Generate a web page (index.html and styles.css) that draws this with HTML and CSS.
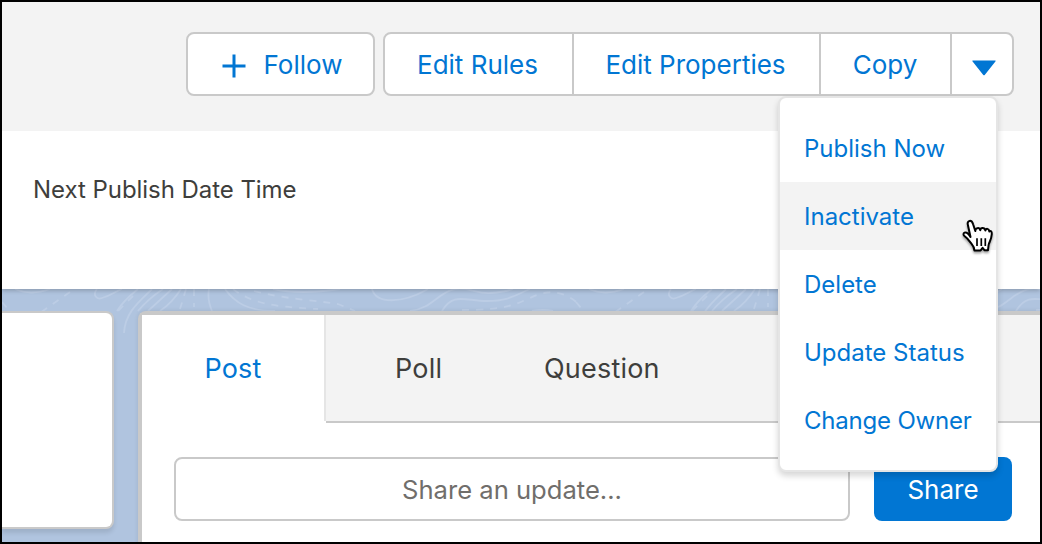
FILE: index.html
```html
<!DOCTYPE html>
<html lang="en">
    <head>
        <meta charset="UTF-8">
        <title>Record Page</title>
        <link rel="stylesheet" href="styles.css">
    </head>
    <body>
        <div class="frame">
            <header class="page-header">
                <button class="button follow">
                    <svg class="plus" viewBox="0 0 24 24"><path d="M12 0.5v23M0.5 12h23"/></svg>
                    <span>Follow</span>
                </button>
                <div class="button-group">
                    <button class="button edit-rules">Edit Rules</button>
                    <button class="button edit-properties">Edit Properties</button>
                    <button class="button copy">Copy</button>
                    <button class="button more" aria-label="More actions">
                        <svg class="arrow" viewBox="0 0 24 16"><path d="M1 .5h22c.7 0 .8.5.4 1L12.7 14.9q-.7.8-1.4 0L.6 1.500C.2 1 .3.5 1 .5z"/></svg>
                    </button>
                    <ul class="menu">
                        <li class="menu-item">Publish Now</li>
                        <li class="menu-item active">Inactivate</li>
                        <li class="menu-item">Delete</li>
                        <li class="menu-item">Update Status</li>
                        <li class="menu-item wide">Change Owner</li>
                    </ul>
                    <svg class="pointer" viewBox="0 0 32 36">
                        <path d="M8.500 18L6 6.500C5.200 3.800 5.800 2.200 7.600 1.900C9.500 1.600 10.400 2.800 11.200 5.500L13.300 12C13 8.700 17.500 8 18.300 11.200C18.500 8.200 22.600 8 23.400 11.500C23.800 9 27 9.300 27.300 12.500C28.500 11.300 30 12.300 29.800 15C29.500 19.500 28.300 21.500 27 24.500C26.400 26 26.400 28.500 26 31.200H22.400L20.600 28.800L18.600 31.400H12.400C12.200 27 9.800 25.400 7.800 22.600C5.800 19.800 4.600 18.700 2.700 17.300C1 16 1.200 14.200 2.500 13.600C4.800 12.600 7 15.400 8.500 18Z"/>
                        <path class="knuckles" d="M15 19.300v7.700M19.300 19.300v7.700M23.300 19.300v7.700"/>
                    </svg>
                </div>
            </header>
            <section class="details">
                <span class="label">Next Publish Date Time</span>
            </section>
            <main>
                <svg class="contours" viewBox="0 0 1042 60">
                    <defs>
                        <g id="contour">
                            <path d="M15 0Q31 7 50 0M97 0C92 6 97 11 102 9C110 7 114 3 122 0M138 0Q123 12 117 22M152 0C140 12 125 23 124 44M163 0Q148 10 138 22M172 0Q161 10 148 22M181 0Q172 14 160 22M209 0Q207 10 212 22M225 0C235 14 248 22 275 22M273 0Q300 6 340 0"/>
                            <path d="M372 0C376 15 402 15 428 0M410 22C432 20 438 3 455 0C470-2 476 5 491 4Q505 3 513 0M442 22C453 3 465 12 487 12C510 12 517 5 530 0M532 22Q543 20 553 22"/>
                            <path class="dashed" d="M2 13L8 20M70 3L40 24M133 7L113 27M186 0L180 20M194 0V18M233 0C250 13 270 18 318 20M254 2C285 10 312 11 338 15L355 22M462 21C505 21 514 16 530 9C548 0 563 1 580 16"/>
                        </g>
                    </defs>
                    <use href="#contour"/>
                    <use href="#contour" x="574"/>
                </svg>
                <div class="side-card"></div>
                <div class="feed">
                    <div class="tabs">
                        <div class="tab post">Post</div>
                        <div class="tab poll">Poll</div>
                        <div class="tab question">Question</div>
                        <div class="tab filler"></div>
                    </div>
                    <div class="composer">
                        <input class="update" type="text" placeholder="Share an update...">
                        <button class="share">Share</button>
                    </div>
                </div>
            </main>
        </div>
    </body>
</html>
```
FILE: styles.css
```css
* {
    box-sizing: border-box;
}

body {
    margin: 0;
    font-family: Inter, "Liberation Sans", sans-serif;
    font-size: 26px;
    color: #3e3e3c;
}

button {
    font: inherit;
    padding: 0;
    cursor: pointer;
}

.frame {
    width: 1042px;
    height: 544px;
    border: 2px solid #000;
    overflow: hidden;
    display: flex;
    flex-direction: column;
    background: #fff;
}

/* header and actions */
.page-header {
    position: relative;
    z-index: 2;
    height: 129px;
    flex: none;
    background: #f3f3f3;
    display: flex;
    justify-content: flex-end;
    align-items: flex-start;
    gap: 8px;
    padding: 30px 26px 0 0;
}

.button {
    height: 64px;
    background: #fff;
    border: 2px solid #c9c9c9;
    color: #0176d3;
    display: flex;
    align-items: center;
    justify-content: center;
    padding-top: 1px;
}

.follow {
    width: 189px;
    padding-left: 3px;
    border-radius: 8px;
    gap: 18px;
}

.plus {
    width: 24px;
    height: 24px;
    margin-top: 2px;
    fill: none;
    stroke: #0176d3;
    stroke-width: 3;
}

.button-group {
    display: flex;
    position: relative;
}

.edit-rules {
    width: 191px;
    padding-right: 2px;
    border-radius: 8px 0 0 8px;
}

.edit-properties {
    width: 249px;
    margin-left: -2px;
    padding-right: 2px;
}

.copy {
    width: 133px;
    margin-left: -2px;
    padding-right: 1px;
}

.more {
    width: 64px;
    margin-left: -2px;
    padding-left: 3px;
    border-radius: 0 8px 8px 0;
}

.arrow {
    width: 24px;
    height: 16px;
    margin-top: 6px;
    fill: #0176d3;
}

/* dropdown */
.menu {
    position: absolute;
    top: 64px;
    right: 16px;
    width: 220px;
    z-index: 2;
    margin: 0;
    padding: 16px 0;
    list-style: none;
    background: #fff;
    border: 2px solid #e5e5e5;
    border-radius: 8px;
    box-shadow: 0 4px 6px rgba(0, 0, 0, 0.16);
}

.menu-item {
    height: 68px;
    line-height: 69px;
    padding-left: 24px;
    font-size: 24px;
    color: #0176d3;
}

.menu-item.active {
    background: #f3f3f3;
}

.menu-item.wide {
    letter-spacing: -0.2px;
}

.pointer {
    position: absolute;
    z-index: 3;
    top: 187px;
    right: 20px;
    width: 32px;
    height: 36px;
    fill: #fff;
    stroke: #000;
    stroke-width: 2;
    stroke-linejoin: round;
    filter: drop-shadow(0 2px 1px rgba(0, 0, 0, 0.35));
}

.knuckles {
    stroke-width: 1.7;
}

/* details */
.details {
    position: relative;
    z-index: 1;
    height: 158px;
    flex: none;
    padding: 43px 31px;
    background: #fff;
    box-shadow: 0 2px 4px rgba(0, 0, 0, 0.2);
}

.label {
    display: block;
    font-size: 24px;
    line-height: 31px;
    letter-spacing: -0.05px;
}

/* feed area */
main {
    flex: 1;
    display: flex;
    align-items: flex-start;
    gap: 24px;
    padding-top: 22px;
    background: #b0c4df;
    position: relative;
}

.contours {
    position: absolute;
    top: 0;
    left: -2px;
    width: 1042px;
    height: 60px;
    fill: none;
    stroke: #bccde5;
    stroke-width: 1.8;
}

.dashed {
    stroke-dasharray: 7 7;
}

.side-card {
    position: relative;
    width: 112px;
    height: 218px;
    background: #fff;
    border: 2px solid #c9c9c9;
    border-left: 0;
    border-radius: 0 8px 8px 0;
    box-shadow: 0 4px 4px rgba(0, 0, 0, 0.1);
}

.feed {
    position: relative;
    flex: 1;
    height: 240px;
    background: #fff;
    border: 4px solid #c9c9c9;
    border-right: 0;
    border-radius: 8px 0 0 0;
    box-shadow: 0 0 4px rgba(0, 0, 0, 0.1);
}

.tabs {
    display: flex;
    height: 108px;
    background: #fff;
}

.tab {
    background: #f3f3f3;
    border-bottom: 2px solid #c9c9c9;
    line-height: 108px;
    font-size: 27px;
    letter-spacing: 0.2px;
}

.post {
    width: 184px;
    height: 106px;
    background: #fff;
    border: 0;
    border-right: 2px solid #e5e5e5;
    border-radius: 4px 0 0 0;
    color: #0176d3;
    text-align: center;
}

.poll {
    width: 184px;
    padding-left: 69px;
}

.question {
    width: 182px;
    padding-left: 34px;
}

.filler {
    flex: 1;
}

.composer {
    display: flex;
    gap: 24px;
    padding: 34px 28px 0 32px;
}

.update {
    width: 676px;
    height: 64px;
    padding: 0 2px;
    border: 2px solid #c9c9c9;
    border-radius: 8px;
    font: inherit;
    font-size: 25.6px;
    text-align: center;
    background: #fff;
}

.update::placeholder {
    color: #706e6b;
}

.share {
    width: 138px;
    height: 64px;
    border: 0;
    border-radius: 8px;
    background: #0176d3;
    color: #fff;
}
```
